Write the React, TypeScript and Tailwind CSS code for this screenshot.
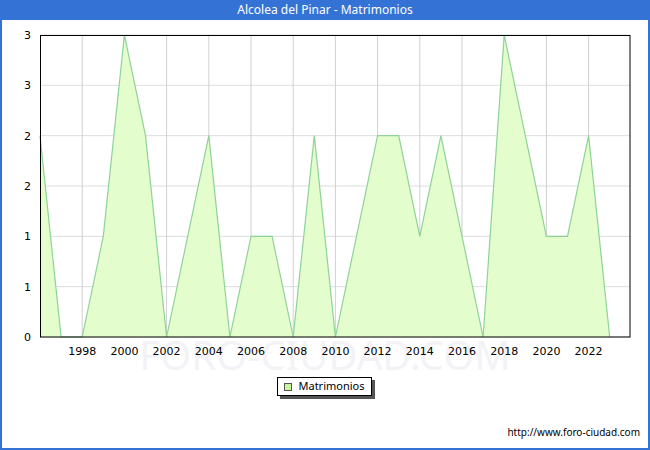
const data = [2, 0, 0, 1, 3, 2, 0, 1, 2, 0, 1, 1, 0, 2, 0, 1, 2, 2, 1, 2, 1, 0, 3, 2, 1, 1, 2, 0];

const x0 = 40;
const step = 21.1;
const yFor = (v: number) => 337 - v * 100.67;

export default function App() {
  const pts = data.map((v, i) => `${x0 + i * step},${yFor(v)}`).join(" ");
  const lastX = x0 + (data.length - 1) * step;
  const area = `${x0},337 ${pts} ${lastX},337`;
  const years = [1998, 2000, 2002, 2004, 2006, 2008, 2010, 2012, 2014, 2016, 2018, 2020, 2022];
  const yTicks = [0, 0.5, 1, 1.5, 2, 2.5, 3];

  return (
    <div className="w-[650px] h-[450px] border-2 border-[#3572d6] bg-white flex flex-col font-['DejaVu_Sans',sans-serif] text-[11px] text-black">
      <div className="h-[20px] -mx-[2px] -mt-[2px] bg-[#3572d6] text-white text-[12px] flex items-center justify-center shrink-0">
        Alcolea del Pinar - Matrimonios
      </div>
      <div className="relative shrink-0 h-[342px]">
        <div className="absolute left-0 right-0 top-[315px] text-center text-[40px] leading-none text-[#f3f3f7] select-none">
          FORO-CIUDAD.COM
        </div>
        <svg width={646} height={342} viewBox="2 20 646 342" className="relative">
          {yTicks.map((t) => (
            <line key={t} x1={x0} x2={630} y1={yFor(t)} y2={yFor(t)} stroke="#dddddd" strokeWidth={1} />
          ))}
          {years.map((y) => {
            const x = x0 + (y - 1996) * step;
            return <line key={y} x1={x} x2={x} y1={35} y2={337} stroke="#d0d0d0" strokeWidth={1} />;
          })}
          <polygon points={area} fill="#e4fdcc" />
          <polyline points={pts} fill="none" stroke="#8ed29a" strokeWidth={1.2} />
          <rect x={40.5} y={35.5} width={589.5} height={301.5} fill="none" stroke="#000" strokeWidth={1} />
          {yTicks.map((t) => (
            <text key={t} x={31} y={yFor(t) + 4} textAnchor="end" fontSize={11} fontFamily="DejaVu Sans, sans-serif">
              {Math.round(t)}
            </text>
          ))}
          {years.map((y) => (
            <text key={y} x={x0 + (y - 1996) * step} y={355} textAnchor="middle" fontSize={11} fontFamily="DejaVu Sans, sans-serif">
              {y}
            </text>
          ))}
        </svg>
      </div>
      <div className="flex justify-center mt-[15px] pr-[2px]">
        <div className="flex items-center gap-[7px] border border-black bg-white px-[6px] h-[19px] shadow-[3px_3px_0_#555]">
          <span className="w-[8px] h-[8px] border border-[#555] bg-[#c8f49a]" />
          <span>Matrimonios</span>
        </div>
      </div>
      <div className="mt-auto mb-[8px] pr-[8px] text-right text-[10px]">http://www.foro-ciudad.com</div>
    </div>
  );
}
